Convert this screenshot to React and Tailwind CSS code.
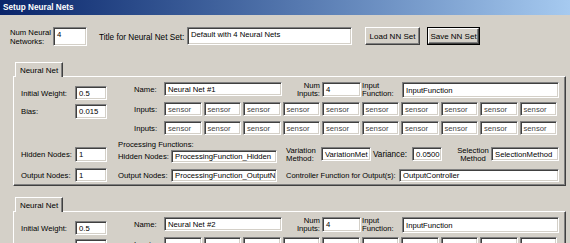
import React from "react";

const sunken =
  "bg-white border border-t-[#808080] border-l-[#808080] border-r-white border-b-white shadow-[inset_1px_1px_0_#404040,inset_-1px_-1px_0_#d4d0c8] px-[3px] flex items-center whitespace-nowrap overflow-hidden text-[7.7px]";

const raised =
  "bg-[#d4d0c8] border border-t-white border-l-white border-r-[#404040] border-b-[#404040] shadow-[inset_-1px_-1px_0_#808080] flex items-center justify-center whitespace-nowrap";

const Field = ({ w, h, children, className = "" }) => (
  <div className={`${sunken} ${w} ${h} ${className}`}>{children}</div>
);

const SensorRow = () => (
  <div className="grid w-[393px] grid-cols-10 gap-x-[2px]">
    {Array.from({ length: 10 }).map((_, i) => (
      <div key={i} className={`${sunken} h-[14px] text-[#444]`}>
        sensor
      </div>
    ))}
  </div>
);

const NetPanel = ({ num }) => (
  <div className="ml-[13px] w-[553px]">
    <div className="relative z-10 ml-[2px] flex h-[15px] w-[48px] items-center justify-center border-l border-t border-r border-l-white border-t-white border-r-[#404040] bg-[#d4d0c8] text-[8px] shadow-[inset_-1px_0_0_#808080]">
      Neural Net
    </div>
    <div className="-mt-[1px] flex h-[110px] border border-t-white border-l-white border-r-[#404040] border-b-[#404040] shadow-[inset_-1px_-1px_0_#808080]">
      {/* left column */}
      <div className="ml-[7px] flex w-[86px] shrink-0 flex-col whitespace-nowrap">
        <div className="mt-[9px] flex items-center">
          <div className="w-[54px]">Initial Weight:</div>
          <Field w="w-[32px]" h="h-[14px]">0.5</Field>
        </div>
        <div className="mt-[4px] flex items-center">
          <div className="w-[54px]">Bias:</div>
          <Field w="w-[32px]" h="h-[15px]">0.015</Field>
        </div>
        <div className="mt-[28px] flex items-center">
          <div className="w-[54px]">Hidden Nodes:</div>
          <Field w="w-[32px]" h="h-[15px]">1</Field>
        </div>
        <div className="mt-[6px] flex items-center">
          <div className="w-[54px]">Output Nodes:</div>
          <Field w="w-[32px]" h="h-[14px]">1</Field>
        </div>
      </div>

      {/* right column */}
      <div className="ml-[11px] flex w-[441px] shrink-0 flex-col whitespace-nowrap">
        <div className="mt-[5px] flex items-start">
          <div className="ml-[16px] mt-[3px] w-[30px]">Name:</div>
          <Field w="w-[118px]" h="h-[14px]">Neural Net #{num}</Field>
          <div className="ml-[2px] w-[38px] pr-[2px] text-right leading-[8px]">
            Num
            <br />
            Inputs:
          </div>
          <Field w="w-[39px]" h="h-[15px]">4</Field>
          <div className="ml-[1px] w-[40px] leading-[8px]">
            Input
            <br />
            Function:
          </div>
          <Field w="w-[157px]" h="h-[16px]">InputFunction</Field>
        </div>
        <div className="mt-[4px] flex items-center">
          <div className="ml-[16px] w-[30px]">Inputs:</div>
          <SensorRow />
        </div>
        <div className="mt-[5px] flex items-center">
          <div className="ml-[16px] w-[30px]">Inputs:</div>
          <SensorRow />
        </div>
        <div className="mt-[5px] leading-[9px]">Processing Functions:</div>
        <div className="-mt-[2px] flex items-start">
          <div className="mt-[5px] w-[53px]">Hidden Nodes:</div>
          <Field w="w-[106px]" h="h-[13px]" className="mt-[3px]">
            ProcessingFunction_Hidden
          </Field>
          <div className="ml-[9px] w-[35px] leading-[8px]">
            Variation
            <br />
            Method:
          </div>
          <Field w="w-[50px]" h="h-[14px]">VariationMet</Field>
          <div className="ml-[2px] mt-[3px] w-[39px] text-[8.2px]">Variance:</div>
          <Field w="w-[30px]" h="h-[14px]">0.0500</Field>
          <div className="ml-[13px] w-[36px] text-center leading-[8px]">
            Selection
            <br />
            Method
          </div>
          <Field w="w-[68px]" h="h-[14px]">SelectionMethod</Field>
        </div>
        <div className="mt-[6px] flex items-center">
          <div className="w-[53px]">Output Nodes:</div>
          <Field w="w-[106px]" h="h-[13px]">ProcessingFunction_OutputN</Field>
          <div className="ml-[9px] w-[113px] text-[7.5px]">Controller Function for Output(s):</div>
          <Field w="w-[160px]" h="h-[13px]">OutputController</Field>
        </div>
      </div>
    </div>
  </div>
);

export default function App() {
  return (
    <div className="h-[243px] w-[570px] overflow-hidden bg-[#d4d0c8] font-['Liberation_Sans',Arial,sans-serif] text-[7.7px] leading-[9px] text-black">
      <div className="flex h-[15px] items-center bg-linear-to-r from-[#0a246a] to-[#a6caf0] pl-[3px] text-[8.2px] font-bold text-white">
        Setup Neural Nets
      </div>

      <div className="flex items-start whitespace-nowrap pl-[10px] pt-[12px]">
        <div className="mt-[1px] w-[43px] leading-[9px]">
          Num Neural
          <br />
          Networks:
        </div>
        <Field w="w-[34px]" h="h-[19px]" className="items-start pt-[2px]">
          4
        </Field>
        <div className="ml-[12px] mt-[6px] w-[88px] text-[8.2px]">Title for Neural Net Set:</div>
        <Field w="w-[165px]" h="h-[18px]" className="items-start pt-[2px]">
          Default with 4 Neural Nets
        </Field>
        <div className={`${raised} ml-[13px] h-[18px] w-[55px] text-[8px]`}>Load NN Set</div>
        <div className="ml-[7px] h-[18px] w-[53px] border border-black">
          <div className={`${raised} h-full w-full text-[8px]`}>Save NN Set</div>
        </div>
      </div>

      <div className="mt-[16px]">
        <NetPanel num={1} />
      </div>
      <div className="mt-[11px]">
        <NetPanel num={2} />
      </div>
    </div>
  );
}
